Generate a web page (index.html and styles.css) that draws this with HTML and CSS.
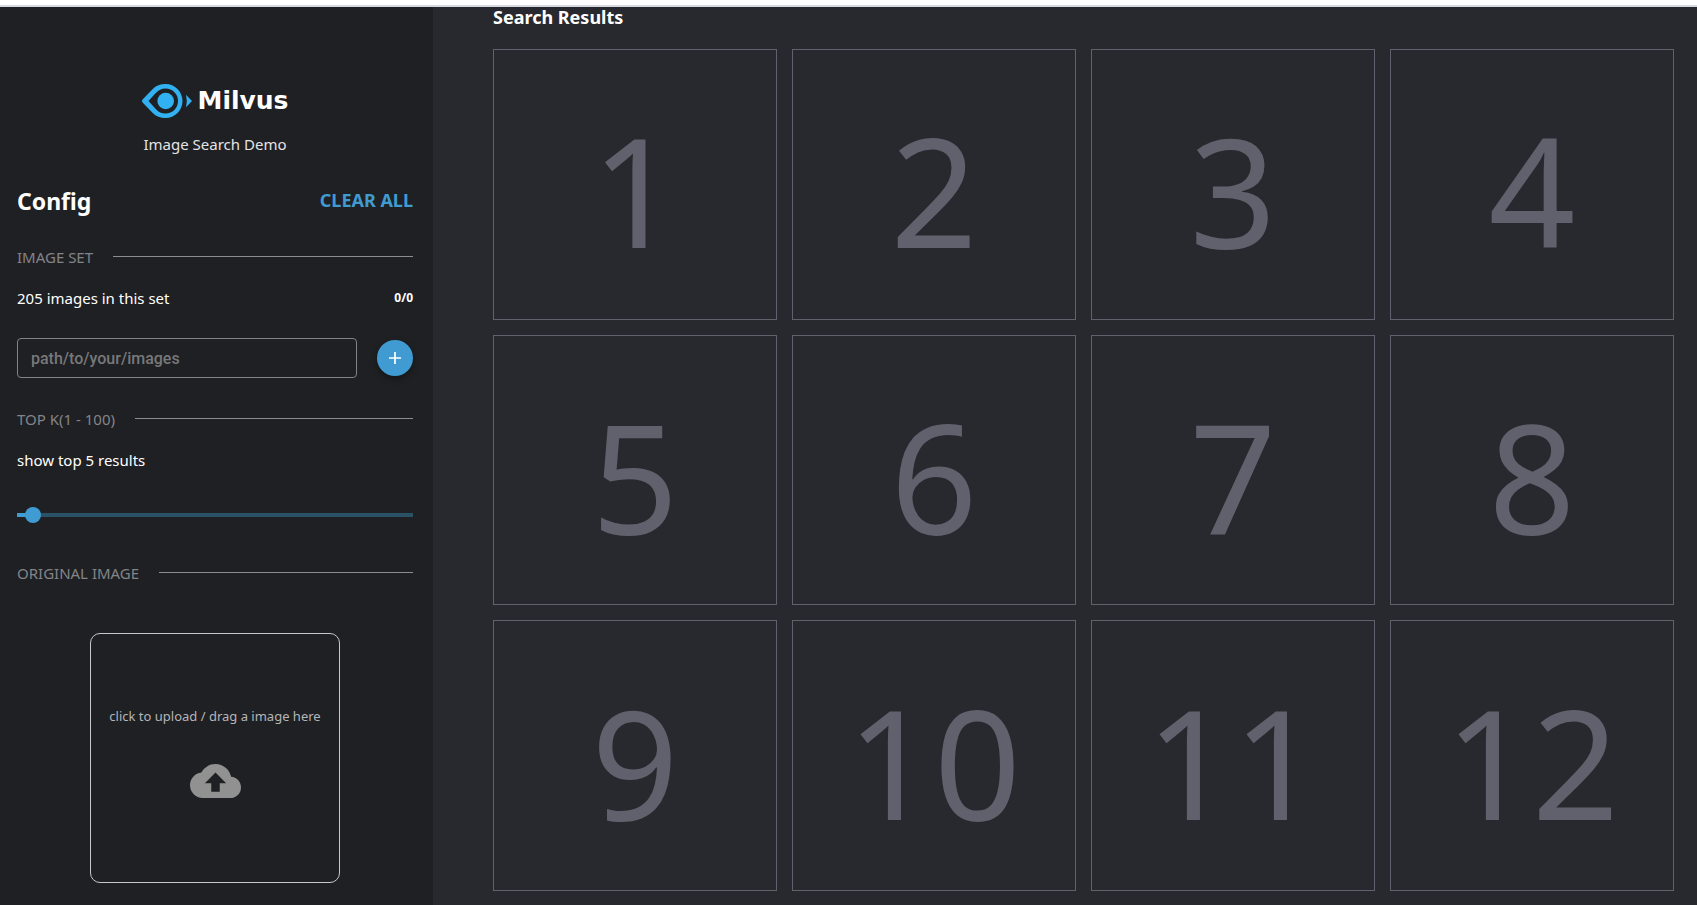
FILE: index.html
```html
<!DOCTYPE html>
<html lang="en">
<head>
<meta charset="utf-8">
<meta name="viewport" content="width=device-width, initial-scale=1">
<title>Milvus Image Search Demo</title>
<link rel="stylesheet" href="styles.css">
</head>
<body>
<div class="app">
  <aside class="sidebar">
    <div class="brand">
      <svg class="brand-mark" viewBox="0 0 50 34" aria-hidden="true">
        <path fill="#31b1f1" fill-rule="evenodd" d="M.6 18.4Q-.6 17 .6 15.6L10.5 5.2C14 1.500 18.500 0 23.500 0C33 0 40.500 7.600 40.500 17S33 34 23.500 34C18.500 34 14 32.500 10.500 28.800ZM6.500 17L13.500 24.700C16.500 28 19.500 29.500 23.500 29.500C30.500 29.500 36 24 36 17S30.500 4.500 23.500 4.500C19.500 4.500 16.500 6 13.500 9.300Z"/>
        <circle cx="23.700" cy="17" r="8.300" fill="#31b1f1"/>
        <path fill="#31b1f1" d="M44 10.800L50 17L44 23.200Q45.600 17 44 10.800Z"/>
      </svg>
      <span class="brand-name">Milvus</span>
    </div>
    <p class="subtitle">Image Search Demo</p>

    <div class="config-head">
      <h1 class="config-title">Config</h1>
      <button class="clear" type="button">CLEAR ALL</button>
    </div>

    <h2 class="section">IMAGE SET</h2>
    <div class="info"><span>205 images in this set</span><strong class="count">0/0</strong></div>
    <form class="path-form">
      <input class="path" type="text" placeholder="path/to/your/images" aria-label="Image path">
      <button class="add" type="button" aria-label="Add images">
        <svg viewBox="0 0 12 12" width="12" height="12" aria-hidden="true"><path d="M6 0V12M0 6H12" stroke="#fff" stroke-width="1.700"/></svg>
      </button>
    </form>

    <h2 class="section section-topk">TOP K(1 - 100)</h2>
    <label class="info" for="topk">show top 5 results</label>
    <input class="slider" id="topk" type="range" min="1" max="100" value="5">

    <h2 class="section section-original">ORIGINAL IMAGE</h2>
    <button class="upload" type="button">
      <span>click to upload / drag a image here</span>
      <svg class="cloud" viewBox="0 4 24 16" aria-hidden="true"><path fill="#919191" d="M19.350 10.040C18.670 6.590 15.640 4 12 4 9.110 4 6.600 5.640 5.350 8.040 2.340 8.360 0 10.910 0 14c0 3.310 2.690 6 6 6h13c2.760 0 5-2.240 5-5 0-2.640-2.050-4.780-4.650-4.960zM14 13v4h-4v-4H7l5-5 5 5h-3z"/></svg>
    </button>
  </aside>

  <main class="results">
    <h2 class="results-title">Search Results</h2>
    <div class="grid">
      <div class="card">1</div>
      <div class="card">2</div>
      <div class="card">3</div>
      <div class="card">4</div>
      <div class="card">5</div>
      <div class="card">6</div>
      <div class="card">7</div>
      <div class="card">8</div>
      <div class="card">9</div>
      <div class="card">10</div>
      <div class="card">11</div>
      <div class="card">12</div>
    </div>
  </main>
</div>
</body>
</html>
```
FILE: styles.css
```css
* { box-sizing: border-box; }
h1, h2, p { margin: 0; }

body {
  margin: 0;
  min-height: 100vh;
  display: flex;
  flex-direction: column;
  border-top: 5px solid #fff;
  background: #28292e;
  color: #fff;
  font: 15px/24px "Noto Sans", sans-serif;
}
button { font-family: inherit; cursor: pointer; }

.app {
  flex: 1;
  display: flex;
  border-top: 2px solid #d5d9e0;
}

/* Sidebar */
.sidebar {
  flex: 0 0 433px;
  display: flex;
  flex-direction: column;
  padding: 77px 20px 22px 17px;
  background: #1f2023;
}
.brand {
  display: flex;
  justify-content: center;
  align-items: center;
  gap: 6px;
}
.brand-mark { width: 50px; height: 34px; }
.brand-name { font: 700 25px/34px "DejaVu Sans", sans-serif; }
.subtitle {
  margin-top: 14px;
  text-align: center;
  color: #e4e4e6;
}
.config-head {
  display: flex;
  justify-content: space-between;
  align-items: flex-start;
  margin-top: 29px;
}
.config-title { font-size: 23px; line-height: 32px; }
.clear {
  padding: 2px 0;
  border: 0;
  background: none;
  color: #3f9bd1;
  font-size: 18px;
  line-height: 26px;
  font-weight: 700;
}
.section {
  display: flex;
  align-items: center;
  gap: 20px;
  margin-top: 28px;
  color: #838488;
  font-size: 15px;
  font-weight: 400;
}
.section::after {
  content: "";
  flex: 1;
  height: 1px;
  margin-bottom: 2px;
  background: #8c8c91;
}
.info {
  display: flex;
  justify-content: space-between;
  margin-top: 17px;
}
.count { font-size: 12px; }
.path-form {
  display: flex;
  align-items: center;
  gap: 20px;
  margin-top: 28px;
}
.path {
  flex: 1;
  min-width: 0;
  height: 40px;
  padding: 0 13px;
  border: 1px solid #838387;
  border-radius: 4px;
  background: none;
  color: #fff;
  font: 500 16px Roboto, sans-serif;
}
.path::placeholder { color: #77787a; opacity: 1; }
.add {
  display: flex;
  justify-content: center;
  align-items: center;
  width: 36px;
  height: 36px;
  padding: 0;
  border: 0;
  border-radius: 50%;
  background: #3f9bd1;
  box-shadow: 0 3px 6px rgba(0, 0, 0, .35);
}
.section-topk { margin-top: 29px; }
.slider {
  -webkit-appearance: none;
  appearance: none;
  height: 16px;
  margin: 35px -8px 0;
  border-radius: 2px;
  background:
    linear-gradient(#3f9bd1, #3f9bd1) 8px 6px / 4% 4px no-repeat,
    linear-gradient(#2b5167, #2b5167) center / calc(100% - 16px) 4px no-repeat;
}
.slider::-webkit-slider-thumb {
  -webkit-appearance: none;
  width: 16px;
  height: 16px;
  border-radius: 50%;
  background: #3f9bd1;
}
.section-original { margin-top: 38px; }
.upload {
  align-self: center;
  display: flex;
  flex-direction: column;
  align-items: center;
  justify-content: center;
  gap: 36px;
  width: 250px;
  height: 250px;
  margin-top: 48px;
  padding: 0 0 14px;
  border: 1px solid #c8c8ca;
  border-radius: 10px;
  background: none;
  color: #b5b5b8;
  font-size: 13px;
  line-height: 24px;
}
.cloud { width: 51px; height: 34px; }

/* Results */
.results {
  flex: 1;
  min-width: 0;
  padding: 0 23px 13px 60px;
}
.results-title { font-size: 18px; line-height: 20px; }
.grid {
  display: grid;
  grid-template-columns: repeat(4, 1fr);
  gap: 15px;
  margin-top: 22px;
}
.card {
  display: flex;
  justify-content: center;
  align-items: center;
  aspect-ratio: 1.049;
  padding-top: 12px;
  border: 1px solid #61606d;
  color: #61606d;
  font-size: 152px;
  line-height: 200px;
}
```
